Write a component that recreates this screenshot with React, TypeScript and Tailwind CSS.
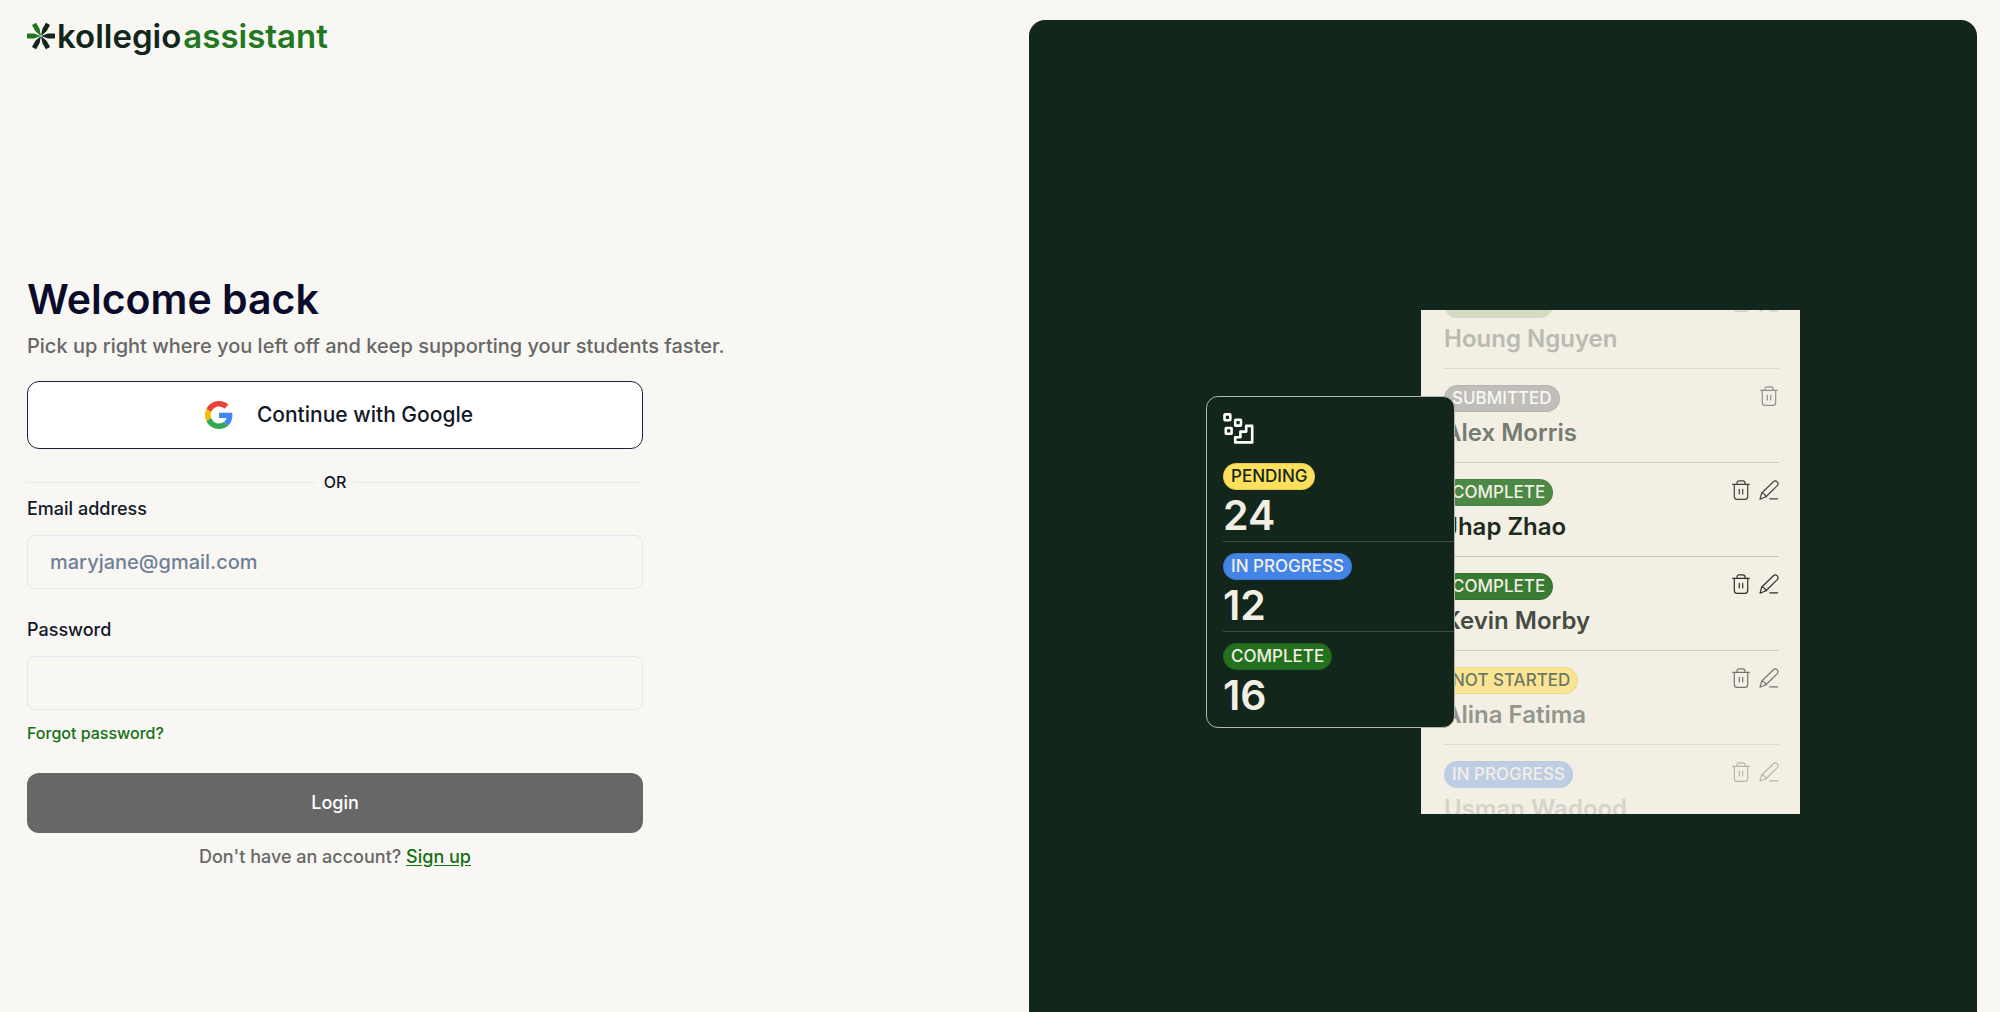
import type { ReactNode } from "react";

const badgeTones = {
  yellow: "bg-[#ffe05c] text-[#12261b]",
  blue: "bg-[#4384e6] text-[#f3efe4]",
  green: "bg-[#23701f] text-[#f3efe4]",
  gray: "bg-[#9d9f9b] text-white",
} as const;

type Tone = keyof typeof badgeTones;

function Badge({ tone, children }: { tone: Tone; children: ReactNode }) {
  return (
    <span
      className={`inline-flex h-[27px] items-center rounded-full border border-black/10 px-[7px] text-[17px] font-medium leading-none ${badgeTones[tone]}`}
    >
      {children}
    </span>
  );
}

function Logo() {
  return (
    <a href="#" aria-label="kollegio assistant" className="flex items-center gap-[2px] text-[33px] font-semibold leading-10">
      <svg viewBox="0 0 28 28" className="size-7 shrink-0" aria-hidden="true">
        <g fill="#12261b">
          <path id="spoke" d="M14.8 13.7 L21 11.6 H27.4 Q28 11.6 28 12.2 V15.8 Q28 16.4 27.4 16.4 H21 L14.8 14.3 Z" />
          <use href="#spoke" transform="rotate(60 14 14)" />
          <use href="#spoke" transform="rotate(120 14 14)" />
          <use href="#spoke" transform="rotate(300 14 14)" />
        </g>
        <g fill="#23771f">
          <path id="leaf" d="M13.2 13.7 L7 11.6 H0.6 Q0 11.6 0 12.2 V15.8 Q0 16.4 0.6 16.4 H7 L13.2 14.3 Z" />
          <use href="#leaf" transform="rotate(60 14 14)" />
        </g>
      </svg>
      <span className="flex gap-[2px]">
        <span className="text-[#12261b]">kollegio</span>
        <span className="text-[#23771f]">assistant</span>
      </span>
    </a>
  );
}

function GoogleIcon() {
  return (
    <svg viewBox="0 0 48 48" className="size-7" aria-hidden="true">
      <path fill="#EA4335" d="M24 9.5c3.54 0 6.71 1.22 9.21 3.6l6.85-6.85C35.9 2.38 30.47 0 24 0 14.62 0 6.51 5.38 2.56 13.22l7.98 6.19C12.43 13.72 17.74 9.5 24 9.5z" />
      <path fill="#4285F4" d="M46.98 24.55c0-1.57-.15-3.09-.38-4.55H24v9.02h12.94c-.58 2.96-2.26 5.48-4.78 7.18l7.73 6c4.51-4.18 7.09-10.36 7.09-17.65z" />
      <path fill="#FBBC05" d="M10.53 28.59c-.48-1.45-.76-2.99-.76-4.59s.27-3.14.76-4.59l-7.98-6.19C.92 16.46 0 20.12 0 24c0 3.88.92 7.54 2.56 10.78l7.97-6.19z" />
      <path fill="#34A853" d="M24 48c6.48 0 11.93-2.13 15.89-5.81l-7.73-6c-2.15 1.45-4.92 2.3-8.16 2.3-6.26 0-11.57-4.22-13.47-9.91l-7.98 6.19C6.51 42.62 14.62 48 24 48z" />
    </svg>
  );
}

function StepsIcon() {
  return (
    <svg viewBox="0 0 32 32" className="size-8" fill="none" stroke="#fff" strokeWidth="2.6" strokeLinejoin="round" aria-hidden="true">
      <rect x="1.5" y="1.4" width="5.8" height="5.8" rx="0.6" />
      <rect x="12.2" y="6.8" width="5.8" height="5.8" rx="0.6" />
      <rect x="2.8" y="15" width="5.8" height="5.8" rx="0.6" />
      <path d="M12.2 29.4 V24.2 H17.4 V18.6 H23.2 V12.9 H29.2 V29.4 Z" />
    </svg>
  );
}

function TrashIcon() {
  return (
    <svg viewBox="0 0 20 20" className="size-5" fill="none" stroke="currentColor" strokeWidth="1.2" strokeLinecap="round" strokeLinejoin="round" aria-hidden="true">
      <path d="M1.7 4.4 H18.3" />
      <path d="M6 4.4 V3 Q6 0.8 8.2 0.8 H11.8 Q14 0.8 14 3 V4.4" />
      <path d="M3.3 4.4 V16.4 Q3.3 19.3 6.2 19.3 H13.8 Q16.7 19.3 16.7 16.4 V4.4" />
      <path d="M8.3 9.4 V14 M11.7 9.4 V14" />
    </svg>
  );
}

function PenIcon() {
  return (
    <svg viewBox="0 0 20 20" className="size-5" fill="none" stroke="currentColor" strokeWidth="1.2" strokeLinecap="round" strokeLinejoin="round" aria-hidden="true">
      <path d="M1 19.2 L2.8 13 L14.4 1.7 Q16.2 0.2 18 1.6 Q20 3.6 18.3 5.6 L7 16.8 Z" />
      <path d="M2.8 13 Q6 13.4 7 16.8" />
      <path d="M10.8 18.8 H18.6" />
    </svg>
  );
}

type Student = {
  name: string;
  status: string;
  tone: Tone;
  badgeFade: string;
  nameColor: string;
  iconColor: string;
  line: string;
  editable: boolean;
};

const students: Student[] = [
  { name: "Houng Nguyen", status: "COMPLETE", tone: "green", badgeFade: "opacity-15", nameColor: "text-[#b9bab0]", iconColor: "text-[#c9c9bf]", line: "border-[#dcdacf]", editable: true },
  { name: "Alex Morris", status: "SUBMITTED", tone: "gray", badgeFade: "opacity-60", nameColor: "text-[#777c73]", iconColor: "text-[#90938a]", line: "border-[#cdccc2]", editable: false },
  { name: "Jhap Zhao", status: "COMPLETE", tone: "green", badgeFade: "opacity-80", nameColor: "text-[#1d2b21]", iconColor: "text-[#3d443b]", line: "border-[#c7c6bc]", editable: true },
  { name: "Kevin Morby", status: "COMPLETE", tone: "green", badgeFade: "opacity-90", nameColor: "text-[#454c42]", iconColor: "text-[#2b332a]", line: "border-[#cdccc2]", editable: true },
  { name: "Alina Fatima", status: "NOT STARTED", tone: "yellow", badgeFade: "opacity-60", nameColor: "text-[#94978e]", iconColor: "text-[#73776e]", line: "border-[#dfddd2]", editable: true },
  { name: "Usman Wadood", status: "IN PROGRESS", tone: "blue", badgeFade: "opacity-30", nameColor: "text-[#d5d4ca]", iconColor: "text-[#b5b6ac]", line: "border-transparent", editable: true },
];

function StudentList() {
  return (
    <div className="flex h-[504px] w-[379px] flex-col justify-center overflow-hidden bg-[#f3efe4] pl-[23px] pr-[21px]">
      <ul className="-mt-2.5 shrink-0">
        {students.map((s) => (
          <li key={s.name} className={`h-[94px] border-b pt-4 ${s.line}`}>
            <div className="flex items-start justify-between">
              <span className={`flex ${s.badgeFade}`}>
                <Badge tone={s.tone}>{s.status}</Badge>
              </span>
              <span className={`flex gap-2 pt-px ${s.iconColor}`}>
                <button type="button" aria-label={`Delete ${s.name}`}>
                  <TrashIcon />
                </button>
                {s.editable && (
                  <button type="button" aria-label={`Edit ${s.name}`}>
                    <PenIcon />
                  </button>
                )}
              </span>
            </div>
            <p className={`text-2xl font-semibold leading-[42px] ${s.nameColor}`}>{s.name}</p>
          </li>
        ))}
      </ul>
    </div>
  );
}

const totals: { label: string; tone: Tone; value: number }[] = [
  { label: "PENDING", tone: "yellow", value: 24 },
  { label: "IN PROGRESS", tone: "blue", value: 12 },
  { label: "COMPLETE", tone: "green", value: 16 },
];

function TotalsCard() {
  return (
    <div className="w-[249px] rounded-xl border border-[#b4b8ae] bg-[#12261b] pb-[5px] pl-4 pt-4">
      <StepsIcon />
      <dl className="mt-[7px]">
        {totals.map((t) => (
          <div key={t.label} className="h-[90px] border-b border-[#3d4c42] pt-[11px] last:border-b-0">
            <dt className="flex">
              <Badge tone={t.tone}>{t.label}</Badge>
            </dt>
            <dd className="text-[41px] font-semibold leading-[50px] text-[#f3efe4]">{t.value}</dd>
          </div>
        ))}
      </dl>
    </div>
  );
}

const inputClass =
  "h-[54px] w-full rounded-lg border border-[#e2e8f0] bg-transparent px-[22px] text-xl font-medium text-[#0f172a] outline-none placeholder:text-[#718096]";

function LoginForm() {
  return (
    <form className="flex w-full max-w-[616px] flex-col font-medium text-[#111827]" onSubmit={(e) => e.preventDefault()}>
      <button type="button" className="flex h-[68px] items-center justify-center gap-6 rounded-xl border border-[#1a2233] bg-white pl-2 text-[21px]">
        <GoogleIcon />
        Continue with Google
      </button>
      <div className="mt-[21px] flex items-center gap-2 text-base leading-6">
        <span className="h-px flex-1 bg-[#e8e9ee]" />
        OR
        <span className="h-px flex-1 bg-[#e8e9ee]" />
      </div>
      <label htmlFor="email" className="mt-[3px] text-lg leading-6">
        Email address
      </label>
      <input id="email" type="email" placeholder="maryjane@gmail.com" className={`mt-[14px] ${inputClass}`} />
      <label htmlFor="password" className="mt-[29px] text-lg leading-6">
        Password
      </label>
      <input id="password" type="password" className={`mt-[14px] ${inputClass}`} />
      <a href="#" className="mt-[11px] self-start text-base leading-6 text-[#147014]">
        Forgot password?
      </a>
      <button type="submit" className="mt-7 h-[60px] rounded-xl bg-[#676767] text-lg text-white">
        Login
      </button>
      <p className="mt-3 text-center text-lg leading-6 text-[#676767]">
        Don't have an account?{" "}
        <a href="#" className="text-[#147014] underline underline-offset-2">
          Sign up
        </a>
      </p>
    </form>
  );
}

export default function App() {
  return (
    <main className="grid h-screen grid-cols-2 gap-[54px] overflow-hidden bg-[#f8f7f3] pl-[27px] pr-[23px] font-['Inter',sans-serif]">
      <section className="flex min-w-0 flex-col pt-4">
        <Logo />
        <div className="flex flex-1 flex-col justify-center pt-[74px]">
          <h1 className="text-[41px] font-semibold leading-[52px] text-[#0b0b2b]">Welcome back</h1>
          <p className="mb-5 mt-[6px] text-xl font-medium leading-[30px] text-[#676767]">
            Pick up right where you left off and keep supporting your students faster.
          </p>
          <LoginForm />
        </div>
      </section>
      <section className="mt-5 flex items-center justify-center rounded-t-2xl bg-[#12261b] pt-[92px]">
        <div className="relative flex justify-end pl-[215px]">
          <StudentList />
          <div className="absolute inset-y-0 left-0 flex items-center">
            <TotalsCard />
          </div>
        </div>
      </section>
    </main>
  );
}
